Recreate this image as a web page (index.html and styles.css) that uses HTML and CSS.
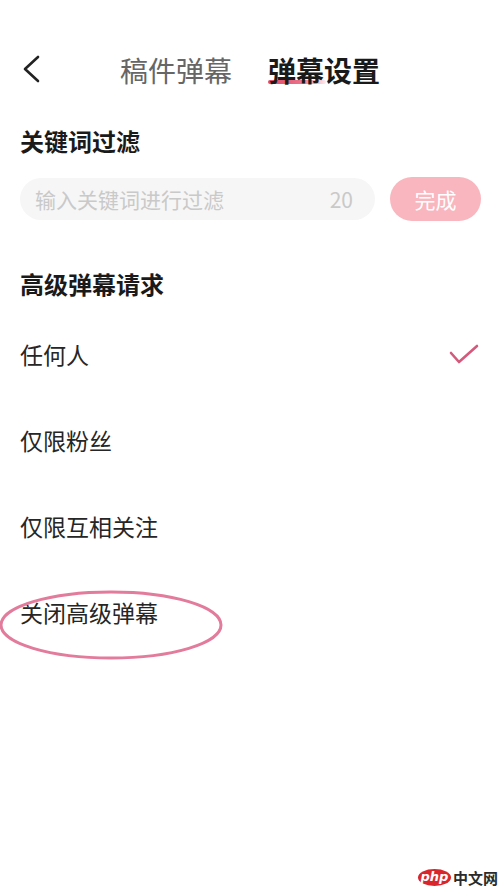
FILE: index.html
```html
<!DOCTYPE html>
<html lang="zh-CN">
<head>
<meta charset="utf-8">
<title>弹幕设置</title>
<link rel="stylesheet" href="styles.css">
</head>
<body>
<div class="page">
  <header class="topbar">
    <button class="back" aria-label="返回">
      <svg width="20" height="30" viewBox="0 0 20 30"><polyline points="16,2 3,14 16,26" fill="none" stroke="#222" stroke-width="2.6" stroke-linecap="round" stroke-linejoin="round"/></svg>
    </button>
    <nav class="tabs">
      <span class="tab">稿件弹幕</span>
      <span class="tab active"><span class="tab-line"></span><span class="tab-text">弹幕设置</span></span>
    </nav>
  </header>

  <h2 class="section-title first">关键词过滤</h2>
  <div class="filter">
    <div class="field">
      <span class="placeholder">输入关键词进行过滤</span>
      <span class="count">20</span>
    </div>
    <button class="done">完成</button>
  </div>

  <h2 class="section-title second">高级弹幕请求</h2>
  <ul class="options">
    <li class="option">任何人
      <svg class="check" width="30" height="22" viewBox="0 0 30 22"><polyline points="2,10 10,19 28,3" fill="none" stroke="#d45a7c" stroke-width="2.6" stroke-linecap="round" stroke-linejoin="round"/></svg>
    </li>
    <li class="option">仅限粉丝</li>
    <li class="option">仅限互相关注</li>
    <li class="option marked">关闭高级弹幕
      <svg class="ring" width="226" height="72" viewBox="0 0 226 72"><ellipse cx="113" cy="36" rx="110" ry="33" fill="none" stroke="#e27b9c" stroke-width="3"/></svg>
    </li>
  </ul>

  <div class="brand"><span class="php">php</span><span class="cn">中文网</span></div>
</div>
</body>
</html>
```

FILE: styles.css
```css
* { box-sizing: border-box; }

html, body {
  margin: 0;
  padding: 0;
  background: #fff;
}

body {
  font-family: "Noto Sans CJK SC", "Noto Sans", sans-serif;
  color: #222;
}

.page {
  position: relative;
  width: 500px;
  height: 889px;
  overflow: hidden;
}

/* top bar */
.topbar {
  display: flex;
  align-items: center;
  height: 60px;
  margin-top: 40px;
  padding-left: 22px;
}

.back {
  display: flex;
  align-items: center;
  padding: 0;
  border: 0;
  background: none;
  width: 20px;
  height: 30px;
}

.tabs {
  display: flex;
  gap: 36px;
  margin-left: 78px;
}

.tab {
  position: relative;
  font-size: 28px;
  line-height: 36px;
  color: #666;
}

.tab.active {
  color: #1a1a1a;
  font-weight: 700;
}

/* red stroke under the selected tab, drawn beneath its text */
.tab-line {
  position: absolute;
  left: 0;
  bottom: 4px;
  width: 58px;
  height: 4px;
  border-radius: 2px;
  background: linear-gradient(90deg, #e04a66 0%, #ea7088 55%, rgba(240, 150, 165, 0.2) 100%);
}

.tab-text { position: relative; }

/* sections */
.section-title {
  margin: 0;
  padding-left: 20px;
  font-size: 24px;
  line-height: 30px;
  font-weight: 700;
  color: #1a1a1a;
}

.section-title.first { margin-top: 26px; }
.section-title.second { margin-top: 48px; }

.filter {
  display: flex;
  align-items: center;
  gap: 15px;
  margin-top: 21px;
  padding-left: 20px;
  height: 44px;
}

.field {
  display: flex;
  align-items: center;
  justify-content: space-between;
  width: 355px;
  height: 42px;
  padding: 0 22px 0 15px;
  border-radius: 21px;
  background: #f6f6f6;
  font-size: 21px;
  color: #c9c9c9;
}

.done {
  width: 91px;
  height: 44px;
  border: 0;
  border-radius: 22px;
  background: #f9b6be;
  color: #fff;
  font-family: inherit;
  font-size: 21px;
  padding: 0;
}

/* options */
.options {
  list-style: none;
  margin: 12px 0 0;
  padding: 0;
}

.option {
  position: relative;
  display: flex;
  align-items: center;
  justify-content: space-between;
  height: 86px;
  padding: 0 20px;
  font-size: 23px;
  color: #262626;
}

.check { margin-right: 1px; }

.ring {
  position: absolute;
  left: -2px;
  top: 20px;
}

/* footer mark */
.brand {
  position: absolute;
  right: 2px;
  bottom: 3px;
  display: flex;
  align-items: center;
  gap: 2px;
}

.php {
  display: inline-block;
  width: 33px;
  height: 17px;
  border-radius: 50%;
  background: #d9262c;
  color: #fff;
  font-family: "DejaVu Sans", sans-serif;
  font-size: 13px;
  font-style: italic;
  font-weight: 700;
  line-height: 15px;
  text-align: center;
}

.cn {
  font-size: 15px;
  font-weight: 700;
  line-height: 17px;
  color: #2b2b2b;
}
```
